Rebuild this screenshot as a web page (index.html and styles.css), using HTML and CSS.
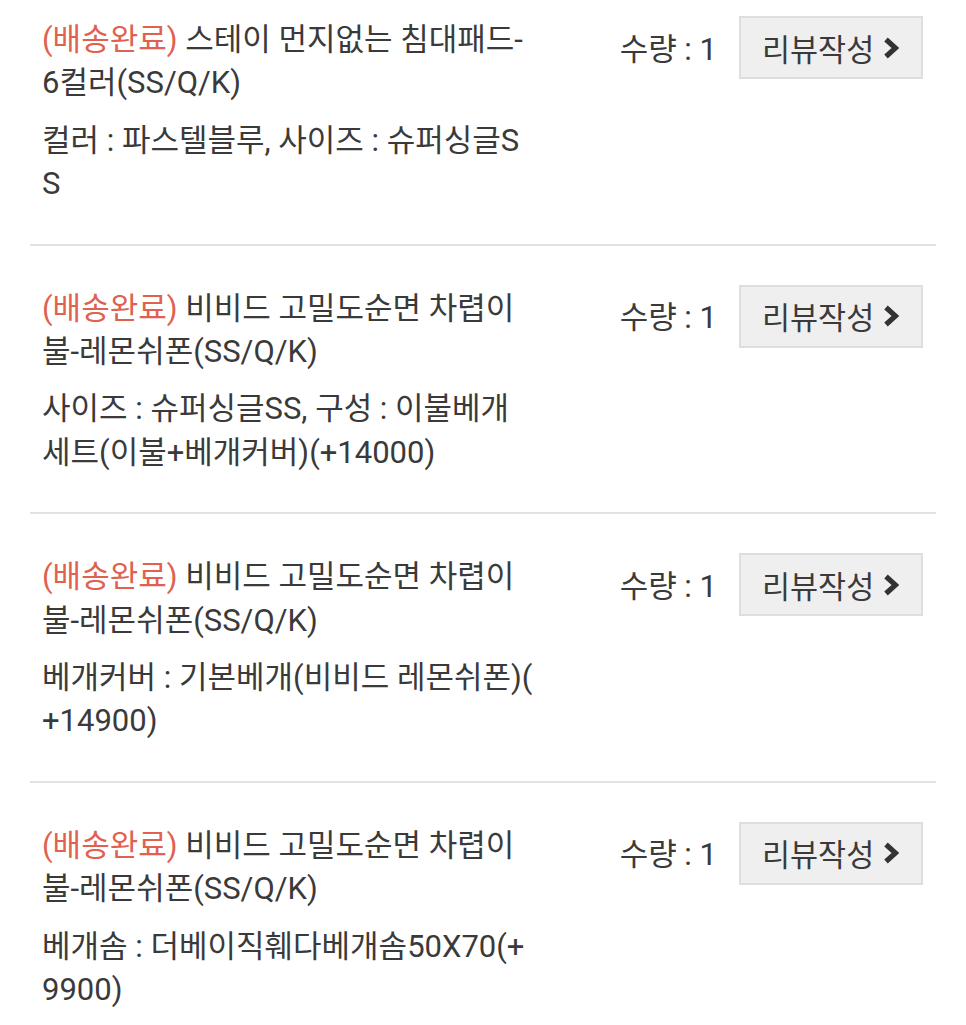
FILE: index.html
```html
<!DOCTYPE html>
<html lang="ko">
<head>
    <meta charset="UTF-8">
    <meta name="viewport" content="width=device-width, initial-scale=1.0">
    <title>주문 상품 목록</title>
    <link rel="stylesheet" href="styles.css">
</head>
<body>
    <!-- 주문 상품 목록 -->
    <ul class="order-list">
        <li class="order-item first">
            <div class="item-info">
                <p class="item-name"><span class="item-state">(배송완료)</span> 스테이 먼지없는 침대패드-6컬러(SS/Q/K)</p>
                <p class="item-option">컬러 : 파스텔블루, 사이즈 : 슈퍼싱글SS</p>
            </div>
            <div class="item-side">
                <span class="item-qty">수량 : 1</span>
                <button class="review-button">리뷰작성
                    <svg class="chevron" viewBox="0 0 16 22" width="16" height="22"><polyline points="3,2.5 12.5,11 3,19.5"/></svg>
                </button>
            </div>
        </li>
        <li class="order-item">
            <div class="item-info">
                <p class="item-name"><span class="item-state">(배송완료)</span> 비비드 고밀도순면 차렵이불-레몬쉬폰(SS/Q/K)</p>
                <p class="item-option">사이즈 : 슈퍼싱글SS, 구성 : 이불베개세트(이불+베개커버)(+14000)</p>
            </div>
            <div class="item-side">
                <span class="item-qty">수량 : 1</span>
                <button class="review-button">리뷰작성
                    <svg class="chevron" viewBox="0 0 16 22" width="16" height="22"><polyline points="3,2.5 12.5,11 3,19.5"/></svg>
                </button>
            </div>
        </li>
        <li class="order-item">
            <div class="item-info">
                <p class="item-name"><span class="item-state">(배송완료)</span> 비비드 고밀도순면 차렵이불-레몬쉬폰(SS/Q/K)</p>
                <p class="item-option">베개커버 : 기본베개(비비드 레몬쉬폰)(+14900)</p>
            </div>
            <div class="item-side">
                <span class="item-qty">수량 : 1</span>
                <button class="review-button">리뷰작성
                    <svg class="chevron" viewBox="0 0 16 22" width="16" height="22"><polyline points="3,2.5 12.5,11 3,19.5"/></svg>
                </button>
            </div>
        </li>
        <li class="order-item">
            <div class="item-info">
                <p class="item-name"><span class="item-state">(배송완료)</span> 비비드 고밀도순면 차렵이불-레몬쉬폰(SS/Q/K)</p>
                <p class="item-option">베개솜 : 더베이직훼다베개솜50X70(+9900)</p>
            </div>
            <div class="item-side">
                <span class="item-qty">수량 : 1</span>
                <button class="review-button">리뷰작성
                    <svg class="chevron" viewBox="0 0 16 22" width="16" height="22"><polyline points="3,2.5 12.5,11 3,19.5"/></svg>
                </button>
            </div>
        </li>
    </ul>
</body>
</html>
```

FILE: styles.css
```css
/* 전체 레이아웃 */
body {
    margin: 0;
    background-color: #fff;
    font-family: Roboto, "Noto Sans CJK KR", sans-serif;
    font-size: 31px;
    color: #3a3a3a;
}

/* 상품 목록 */
.order-list {
    list-style: none;
    margin: 0 30px;
    padding: 0;
}

.order-item {
    display: flex;
    justify-content: space-between;
    align-items: flex-start;
    padding: 41px 13px 38px 12px;
    border-bottom: 2px solid #e2e2e2;
}

.order-item.first {
    padding-top: 18px;
}

/* 상품 정보 */
.item-info {
    width: 491px;
    word-break: break-all;
    line-break: anywhere;
}

.item-name,
.item-option {
    margin: 0;
    line-height: 43.4px;
}

.item-option {
    margin-top: 14px;
}

.item-state {
    color: #e0614f;
}

/* 수량 + 리뷰 버튼 */
.item-side {
    display: flex;
    align-items: center;
    gap: 22px;
    margin-top: -2px;
}

.item-qty {
    line-height: 43px;
    padding-top: 3px;
}

.review-button {
    display: flex;
    align-items: center;
    gap: 9px;
    box-sizing: border-box;
    width: 184px;
    height: 63px;
    padding: 0 0 0 21px;
    border: 2px solid #dedede;
    background-color: #efefef;
    font-family: inherit;
    font-size: 30.5px;
    color: #3a3a3a;
    cursor: pointer;
}

.chevron {
    fill: none;
    stroke: #333;
    stroke-width: 5.2;
    stroke-linejoin: miter;
}
```
